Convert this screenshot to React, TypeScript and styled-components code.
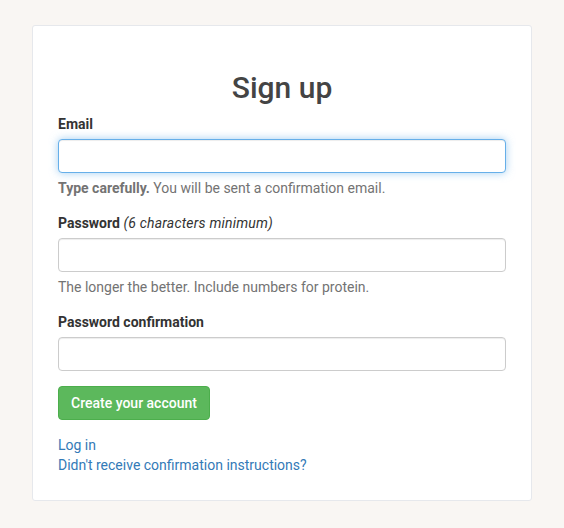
import React from "react";
import styled, { createGlobalStyle } from "styled-components";

const GlobalStyle = createGlobalStyle`
  * { box-sizing: border-box; }
  body {
    margin: 0;
    background: #f9f6f3;
    font-family: Roboto, "Liberation Sans", sans-serif;
    font-size: 14px;
    line-height: 20px;
    color: #333;
  }
`;

const Page = styled.div`
  display: flex;
  justify-content: center;
  padding-top: 25px;
`;

const Card = styled.div`
  width: 500px;
  background: #fff;
  border: 1px solid #e6e8ec;
  border-radius: 3px;
  padding: 25px 25px 25px;
`;

const Title = styled.h2`
  margin: 20px 0 10px;
  font-size: 30px;
  line-height: 33px;
  font-weight: 500;
  text-align: center;
  color: #444;
`;

const FormGroup = styled.div`
  margin-bottom: 15px;
`;

const Label = styled.label`
  display: block;
  margin-bottom: 5px;
  font-weight: 700;
  color: #333;

  em {
    font-weight: 400;
    letter-spacing: 0.2px;
  }
`;

const Input = styled.input<{ $focused?: boolean }>`
  display: block;
  width: 100%;
  height: 34px;
  padding: 6px 12px;
  font: inherit;
  border: 1px solid ${(p) => (p.$focused ? "#66afe9" : "#ccc")};
  border-radius: 4px;
  outline: none;
  box-shadow: ${(p) =>
    p.$focused
      ? "inset 0 1px 1px rgba(0,0,0,.075), 0 0 8px rgba(102,175,233,.6)"
      : "inset 0 1px 1px rgba(0,0,0,.075)"};
`;

const Help = styled.p`
  margin: 5px 0 10px;
  color: #737373;

  strong {
    font-weight: 700;
  }
`;

const Button = styled.button`
  height: 34px;
  padding: 6px 12px;
  font: inherit;
  font-weight: 500;
  color: #fff;
  background: #5cb85c;
  border: 1px solid #4cae4c;
  border-radius: 4px;
`;

const Links = styled.div`
  margin-top: 15px;
  display: flex;
  flex-direction: column;
`;

const Link = styled.a`
  color: #337ab7;
  text-decoration: none;
  align-self: flex-start;
`;

export default function App() {
  return (
    <>
      <GlobalStyle />
      <Page>
        <Card>
          <Title>Sign up</Title>
          <FormGroup>
            <Label>Email</Label>
            <Input type="email" $focused />
            <Help>
              <strong>Type carefully.</strong> You will be sent a confirmation email.
            </Help>
          </FormGroup>
          <FormGroup>
            <Label>
              Password <em>(6 characters minimum)</em>
            </Label>
            <Input type="password" />
            <Help>The longer the better. Include numbers for protein.</Help>
          </FormGroup>
          <FormGroup>
            <Label>Password confirmation</Label>
            <Input type="password" />
          </FormGroup>
          <Button>Create your account</Button>
          <Links>
            <Link href="#">Log in</Link>
            <Link href="#">Didn't receive confirmation instructions?</Link>
          </Links>
        </Card>
      </Page>
    </>
  );
}
